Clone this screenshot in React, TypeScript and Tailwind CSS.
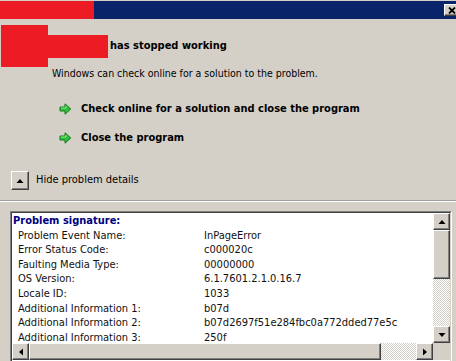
import React from 'react';

const FONT = "font-['DejaVu_Sans_Condensed','DejaVu_Sans',sans-serif] [font-stretch:condensed]";
const RAISED =
  'bg-[#d4d0c8] border border-t-white border-l-white border-b-[#404040] border-r-[#404040] shadow-[inset_-1px_-1px_0_#808080]';
const TRACK = 'bg-[repeating-conic-gradient(#ffffff_0_25%,#d4d0c8_0_50%)] bg-[length:2px_2px]';

const rows: [string, string][] = [
  ['Problem Event Name:', 'InPageError'],
  ['Error Status Code:', 'c000020c'],
  ['Faulting Media Type:', '00000000'],
  ['OS Version:', '6.1.7601.2.1.0.16.7'],
  ['Locale ID:', '1033'],
  ['Additional Information 1:', 'b07d'],
  ['Additional Information 2:', 'b07d2697f51e284fbc0a772dded77e5c'],
  ['Additional Information 3:', '250f'],
];

function GreenArrow() {
  return (
    <svg width="13" height="12" viewBox="0 0 13 12">
      <polygon
        points="1,4 6,4 6,0.8 11.8,6 6,11.2 6,8 1,8"
        fill="#2fbf3a"
        stroke="#127a1c"
        strokeWidth="1"
        strokeLinejoin="round"
      />
      <path d="M2 5 H7 V3" stroke="#8ee890" strokeWidth="1" fill="none" />
    </svg>
  );
}

function Tri({ dir }: { dir: 'up' | 'down' | 'left' | 'right' }) {
  const pts = {
    up: '0.5,5 4,1 7.5,5',
    down: '0.5,1 4,5 7.5,1',
    left: '5,0.5 1,4 5,7.5',
    right: '1,0.5 5,4 1,7.5',
  }[dir];
  const vert = dir === 'up' || dir === 'down';
  return (
    <svg width={vert ? 8 : 6} height={vert ? 6 : 8} viewBox={vert ? '0 0 8 6' : '0 0 6 8'}>
      <polygon points={pts} fill="#000" />
    </svg>
  );
}

function LinkRow({ label }: { label: string }) {
  return (
    <div className="flex items-center h-[18px] pl-[59px]">
      <GreenArrow />
      <span className="ml-[9px] font-bold text-[11px]">{label}</span>
    </div>
  );
}

export default function App() {
  return (
    <div className={`w-[456px] h-[361px] overflow-hidden bg-[#d4d0c8] text-black text-[11px] ${FONT}`}>
      {/* title bar */}
      <div className="h-[19px] border-t border-[#d4d0c8] bg-[#0a246a] flex items-start overflow-hidden">
        <div className="w-[94px] h-[18px] bg-[#ed1c24] shrink-0" />
        <div className="flex-1" />
        <div className={`mt-[3px] w-[16px] h-[12px] shrink-0 -mr-[4px] flex items-center justify-center ${RAISED}`}>
          <svg width="8" height="7" viewBox="0 0 8 7">
            <path d="M1 0.5 L7 6.5 M7 0.5 L1 6.5" stroke="#000" strokeWidth="1.8" />
          </svg>
        </div>
      </div>

      {/* heading */}
      <div className="mt-[6px] flex items-center h-[42px] pl-[1px]">
        <div className="w-[47px] h-[42px] bg-[#ed1c24]" />
        <div className="w-[60px] h-[23px] bg-[#ed1c24]" />
        <span className="ml-[2px] font-bold text-[11px]">has stopped working</span>
      </div>
      <div className="-mt-[1px] h-[14px] leading-[14px] pl-[52px] text-[10.5px]">
        Windows can check online for a solution to the problem.
      </div>

      <div className="mt-[20px]">
        <LinkRow label="Check online for a solution and close the program" />
      </div>
      <div className="mt-[11px]">
        <LinkRow label="Close the program" />
      </div>

      {/* details toggle */}
      <div className="mt-[24px] flex items-center h-[19px] pl-[11px]">
        <div className={`w-[18px] h-[19px] flex items-center justify-center ${RAISED}`}>
          <Tri dir="up" />
        </div>
        <span className="ml-[7px]">Hide problem details</span>
      </div>

      <div className="mt-[10px] h-[2px] border-t border-[#a0a0a0] border-b border-b-white" />

      {/* details box */}
      <div className="mt-[9px] ml-[10px] w-[442px] h-[152px] border border-t-[#808080] border-l-[#808080] border-b-white border-r-white">
        <div className="w-full h-full border border-t-[#404040] border-l-[#404040] border-b-[#d4d0c8] border-r-[#d4d0c8] grid grid-cols-[1fr_17px] grid-rows-[130px_17px] bg-white">
          <div className="overflow-hidden leading-[14.6px] pt-[1px]">
            <div className="pl-[1px] font-bold text-[#000080]">Problem signature:</div>
            {rows.map(([k, v]) => (
              <div key={k} className="flex pl-[6px] whitespace-nowrap text-[#111]">
                <span className="w-[186px] shrink-0">{k}</span>
                <span>{v}</span>
              </div>
            ))}
          </div>

          {/* vertical scrollbar */}
          <div className="flex flex-col bg-[#d4d0c8]">
            <div className={`h-[17px] flex items-center justify-center ${RAISED}`}>
              <Tri dir="up" />
            </div>
            <div className={`h-[49px] ${RAISED}`} />
            <div className={`flex-1 ${TRACK}`} />
            <div className={`h-[17px] flex items-center justify-center ${RAISED}`}>
              <Tri dir="down" />
            </div>
          </div>

          {/* horizontal scrollbar */}
          <div className="flex bg-[#d4d0c8]">
            <div className={`w-[17px] flex items-center justify-center ${RAISED}`}>
              <Tri dir="left" />
            </div>
            <div className={`w-[352px] ${RAISED}`} />
            <div className={`flex-1 ${TRACK}`} />
            <div className={`w-[17px] flex items-center justify-center ${RAISED}`}>
              <Tri dir="right" />
            </div>
          </div>
          <div className="bg-[#d4d0c8]" />
        </div>
      </div>
    </div>
  );
}
